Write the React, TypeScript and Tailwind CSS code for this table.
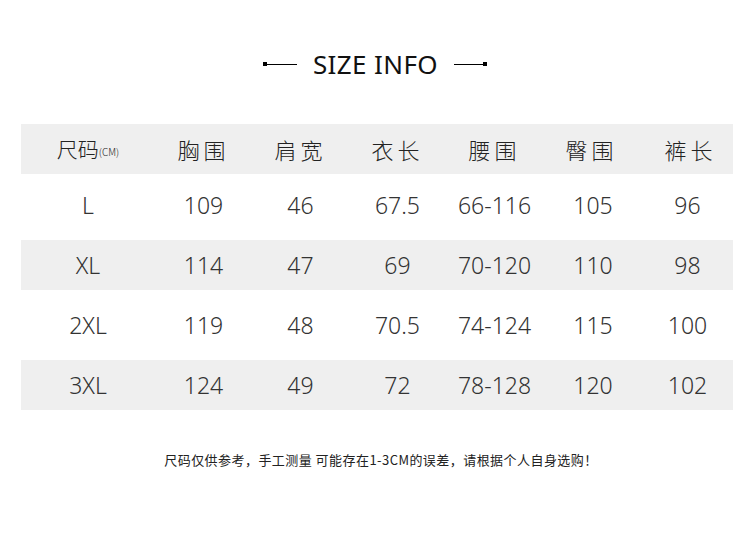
const cols = "grid grid-cols-[134px_97px_97px_97px_97px_97px_93px] items-center"

const rows = [
  ["L", "109", "46", "67.5", "66-116", "105", "96"],
  ["XL", "114", "47", "69", "70-120", "110", "98"],
  ["2XL", "119", "48", "70.5", "74-124", "115", "100"],
  ["3XL", "124", "49", "72", "78-128", "120", "102"],
]

const heads = ["胸围", "肩宽", "衣长", "腰围", "臀围", "裤长"]

const cjk = { fontFamily: '"Noto Sans CJK SC", "Noto Sans", sans-serif' }
const num = { fontFamily: '"Noto Sans", "Open Sans", sans-serif' }

export default function App() {
  return (
    <div className="w-[750px] h-[542px] bg-white text-[#222] overflow-hidden">
      {/* title */}
      <div className="flex items-center justify-center pt-[46px] h-[82px]">
        <div className="flex items-center">
          <span className="w-[4px] h-[4px] bg-black" />
          <span className="w-[30px] h-px bg-black" />
        </div>
        <span className="mx-[16px] text-[26px] font-normal leading-none tracking-[0.4px] text-[#111]" style={num}>
          SIZE INFO
        </span>
        <div className="flex items-center">
          <span className="w-[29px] h-px bg-black" />
          <span className="w-[4px] h-[4px] bg-black" />
        </div>
      </div>

      {/* table */}
      <div className="mt-[42px] ml-[21px] w-[712px]">
        <div className={`${cols} h-[50px] bg-[#efefef]`}>
          <div className="text-center text-[21px] font-light text-[#222]" style={cjk}>
            尺码<span className="text-[10px] align-middle">(CM)</span>
          </div>
          {heads.map((h, i) => (
            <div
              key={h}
              className={`text-center text-[22px] font-light tracking-[4px] text-[#222] ${i === 5 ? "pl-[8px]" : ""}`}
              style={cjk}
            >
              {h}
            </div>
          ))}
        </div>
        {rows.map((r, ri) => (
          <div
            key={r[0]}
            className={`${cols} ${ri % 2 === 1 ? "bg-[#efefef] h-[50px]" : ri === 0 ? "h-[66px] pb-[3px]" : "h-[70px]"}`}
          >
            {r.map((c, ci) => (
              <div
                key={ci}
                className={`text-center text-[23px] font-light text-[#333] ${ci === 6 ? "pl-[2px]" : ""} ${ci === 5 ? "pl-[3px]" : ""}`}
                style={num}
              >
                {c}
              </div>
            ))}
          </div>
        ))}
      </div>

      {/* note */}
      <p className="mt-[40px] pl-[12px] text-center text-[13px] tracking-[0.45px] text-[#222]" style={cjk}>
        尺码仅供参考，手工测量 可能存在1-3CM的误差，请根据个人自身选购！
      </p>
    </div>
  )
}
